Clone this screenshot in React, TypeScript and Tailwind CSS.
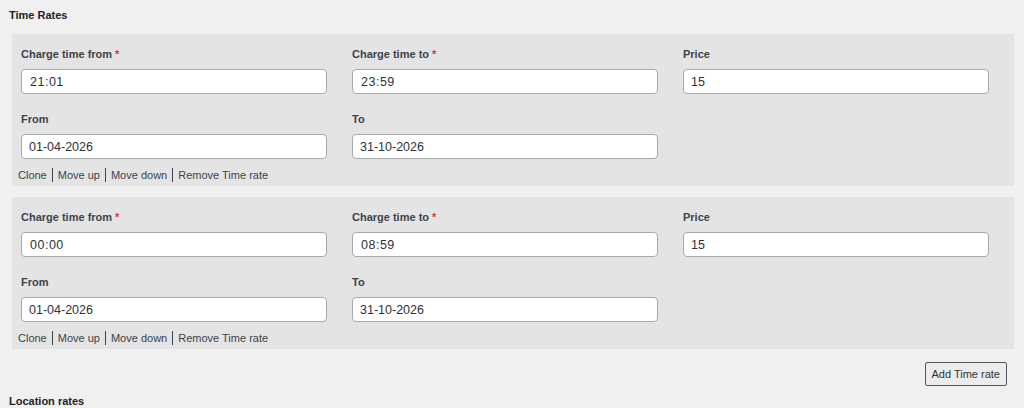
import React from "react"

type Rate = {
  from: string
  to: string
  price: string
  dateFrom: string
  dateTo: string
}

const rates: Rate[] = [
  { from: "21:01", to: "23:59", price: "15", dateFrom: "01-04-2026", dateTo: "31-10-2026" },
  { from: "00:00", to: "08:59", price: "15", dateFrom: "01-04-2026", dateTo: "31-10-2026" },
]

function Field({ label, value, required, time }: { label: string; value: string; required?: boolean; time?: boolean }) {
  return (
    <div className="w-[306px] flex flex-col">
      <label className="h-[14px] leading-[14px] text-[11px] font-bold text-[#3c434a]">
        {label}
        {required && <span className="text-[#d63638] ml-[3px]">*</span>}
      </label>
      <input
        readOnly
        value={value}
        className={
          "mt-[8px] h-[25px] w-full rounded-[4px] border border-[#a7aaad] bg-white text-[12.5px] text-[#2c3338] outline-none " +
          (time ? "pl-[8px] tracking-[0.5px]" : "pl-[7px]")
        }
      />
    </div>
  )
}

function RateCard({ rate }: { rate: Rate }) {
  return (
    <div className="ml-[12px] w-[1002px] bg-[#e4e4e4] pl-[9px] pt-[13px] pb-[1px]">
      <div className="flex gap-[25px]">
        <Field label="Charge time from" value={rate.from} required time />
        <Field label="Charge time to" value={rate.to} required time />
        <Field label="Price" value={rate.price} />
      </div>
      <div className="flex gap-[25px] mt-[18px]">
        <Field label="From" value={rate.dateFrom} />
        <Field label="To" value={rate.dateTo} />
      </div>
      <div className="flex items-center h-[20px] mt-[6px] -ml-[3px] text-[11px] text-[#3c434a]">
        <span>Clone</span>
        <span className="mx-[5px] h-[14px] w-px bg-[#3c434a]" />
        <span>Move up</span>
        <span className="mx-[5px] h-[14px] w-px bg-[#3c434a]" />
        <span>Move down</span>
        <span className="mx-[5px] h-[14px] w-px bg-[#3c434a]" />
        <span>Remove Time rate</span>
      </div>
    </div>
  )
}

export default function App() {
  return (
    <div className="w-[1024px] h-[408px] overflow-hidden bg-[#f0f0f0] font-['Liberation_Sans',Arial,sans-serif]">
      <h2 className="pl-[9px] pt-[8px] h-[34px] text-[11px] font-bold leading-[14px] text-[#1d2327]">Time Rates</h2>
      <div className="flex flex-col gap-[11px]">
        {rates.map((r, i) => (
          <RateCard key={i} rate={r} />
        ))}
      </div>
      <div className="flex justify-end pr-[17px] mt-[13px]">
        <button className="h-[24px] px-[6px] rounded-[2px] border border-[#50575e] bg-[#ececec] text-[11px] text-[#2c3338]">
          Add Time rate
        </button>
      </div>
      <h2 className="pl-[9px] mt-[8px] text-[11px] font-bold leading-[14px] text-[#1d2327]">Location rates</h2>
    </div>
  )
}
